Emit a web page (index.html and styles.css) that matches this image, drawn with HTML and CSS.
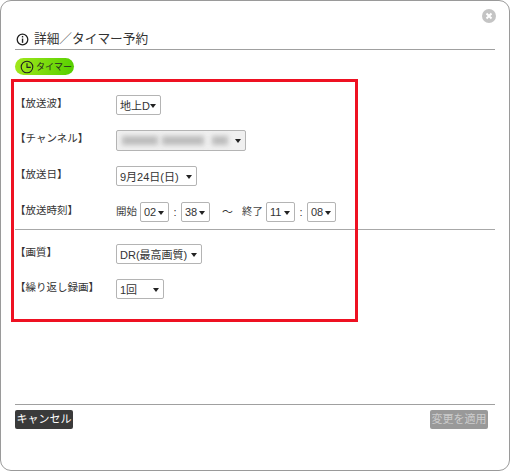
FILE: index.html
```html
<!DOCTYPE html>
<html lang="ja">
<head>
<meta charset="utf-8">
<title>詳細／タイマー予約</title>
<link rel="stylesheet" href="styles.css">
</head>
<body>
<div class="modal">
  <button class="close" aria-label="閉じる">
    <svg viewBox="0 0 14 14" width="14" height="14"><circle cx="7" cy="7" r="7" fill="#c4c4c4"/><path d="M4.5 4.5l5 5M9.5 4.5l-5 5" stroke="#fff" stroke-width="2"/></svg>
  </button>
  <header class="title">
    <svg class="info" viewBox="0 0 14 14" width="13" height="13"><circle cx="7" cy="7" r="5.7" fill="none" stroke="#222" stroke-width="1.4"/><rect x="6.3" y="3.2" width="1.5" height="1.6" fill="#222"/><rect x="6.3" y="6" width="1.5" height="4.6" fill="#222"/></svg>
    <span>詳細／タイマー予約</span>
  </header>
  <div class="pill-row">
    <span class="pill">
      <svg viewBox="0 0 14 14" width="14" height="14"><circle cx="7" cy="7" r="5.8" fill="none" stroke="#222" stroke-width="1.1"/><path d="M7 3.2V7.4H10.8" fill="none" stroke="#222" stroke-width="1.1"/></svg>
      タイマー
    </span>
  </div>
  <section class="form">
    <div class="row row-a"><span class="label">【放送波】</span><span class="select w45">地上D<i></i></span></div>
    <div class="row"><span class="label">【チャンネル】</span><span class="select w130 blurred"><b class="smear s1"></b><b class="smear s2"></b><b class="smear s3"></b><i></i></span></div>
    <div class="row"><span class="label">【放送日】</span><span class="select w81">9月24日(日)<i></i></span></div>
    <div class="row row-d"><span class="label">【放送時刻】</span>
      <span class="time">
        <span class="word">開始</span><span class="select w29">02<i></i></span><span class="colon">:</span><span class="select w29">38<i></i></span>
        <span class="tilde">～</span>
        <span class="word">終了</span><span class="select w29">11<i></i></span><span class="colon">:</span><span class="select w29">08<i></i></span>
      </span>
    </div>
    <hr class="rule">
    <div class="row row-e"><span class="label">【画質】</span><span class="select w86">DR(最高画質)<i></i></span></div>
    <div class="row"><span class="label">【繰り返し録画】</span><span class="select w48">1回<i></i></span></div>
  </section>
  <footer class="foot">
    <button class="btn cancel">キャンセル</button>
    <button class="btn apply" disabled>変更を適用</button>
  </footer>
  <div class="annotation"></div>
</div>
</body>
</html>
```

FILE: styles.css
```css
* { box-sizing: border-box; }
html, body { margin: 0; padding: 0; background: #fff; }
body {
  width: 510px;
  height: 471px;
  overflow: hidden;
  font-family: "Liberation Sans", "Noto Sans CJK JP", sans-serif;
  color: #333;
}
.modal {
  position: relative;
  width: 510px;
  height: 471px;
  padding: 0 15px 0;
  border: 1px solid #9a9a9a;
  border-radius: 11px;
  background: #fff;
  display: flex;
  flex-direction: column;
}
.close {
  position: absolute;
  top: 8px;
  right: 13px;
  width: 14px;
  height: 14px;
  padding: 0;
  border: 0;
  background: none;
  line-height: 0;
}
.title {
  margin: 28px -1px 0 -1px;
  height: 21px;
  padding-left: 1px;
  display: flex;
  align-items: center;
  gap: 5px;
  border-bottom: 1px solid #a0a0a0;
  font-size: 12.7px;
  line-height: 18px;
  color: #333;
}
.pill-row { margin: 8px 0 0 -1px; display: flex; }
.pill {
  width: 59px;
  height: 17px;
  padding-left: 5px;
  border-radius: 9px;
  background: linear-gradient(100deg, #a2e81c, #55cf00);
  display: flex;
  align-items: center;
  gap: 2px;
  font-size: 9px;
  color: #222;
}
.form { margin: 0 -1px; display: flex; flex-direction: column; padding-top: 20px; }
.row {
  display: flex;
  align-items: flex-start;
  height: 36px;
}
.row-a { height: 35px; }
.row-d { height: 27px; }
.row-e { height: 35px; }
.label {
  width: 101px;
  font-size: 10.5px;
  line-height: 16px;
  color: #333;
}
.select {
  position: relative;
  display: inline-flex;
  align-items: center;
  height: 20px;
  padding-left: 3px;
  border: 1px solid #b4b4b4;
  border-radius: 2px;
  background: #fff;
  font-size: 11px;
  color: #333;
}
.select i {
  position: absolute;
  right: 4px;
  top: 8px;
  border: 3px solid transparent;
  border-top: 4px solid #222;
  border-bottom: 0;
}
.w45 { width: 45px; }
.w130 { width: 130px; height: 21px; }
.w81 { width: 81px; }
.w29 { width: 29px; }
.w86 { width: 86px; }
.w48 { width: 48px; }
.blurred { background: #f0f0f0; overflow: hidden; }
.smear {
  position: absolute;
  top: 5px;
  height: 9px;
  background: #bcbcbc;
  filter: blur(2.5px);
}
.s1 { left: 5px; width: 36px; }
.s2 { left: 45px; width: 42px; }
.s3 { left: 95px; width: 16px; }
.time { display: flex; align-items: flex-start; }
.word { width: 24px; font-size: 10.5px; line-height: 18px; color: #444; }
.colon { width: 12px; text-align: center; font-size: 11px; line-height: 20px; }
.tilde { width: 20px; margin-left: 12px; font-size: 11px; line-height: 20px; }
.rule {
  width: 480px;
  height: 1px;
  margin: 0 0 14px 0;
  border: 0;
  background: #a8a8a8;
}
.foot {
  margin: auto -1px 18px;
  height: 48px;
  padding: 5px 7px 0 0;
  border-top: 1px solid #a0a0a0;
  display: flex;
  justify-content: space-between;
  align-items: flex-start;
}
.btn {
  height: 19px;
  width: 58px;
  padding: 0;
  border: 0;
  border-radius: 2px;
  font-family: inherit;
  font-size: 11px;
  line-height: 19px;
}
.cancel { background: #3a3a3a; color: #fff; }
.apply { background: #999; color: #ccc; }
.annotation {
  position: absolute;
  left: 10px;
  top: 78px;
  width: 347px;
  height: 243px;
  border: 3px solid #ee1122;
  pointer-events: none;
}
```
